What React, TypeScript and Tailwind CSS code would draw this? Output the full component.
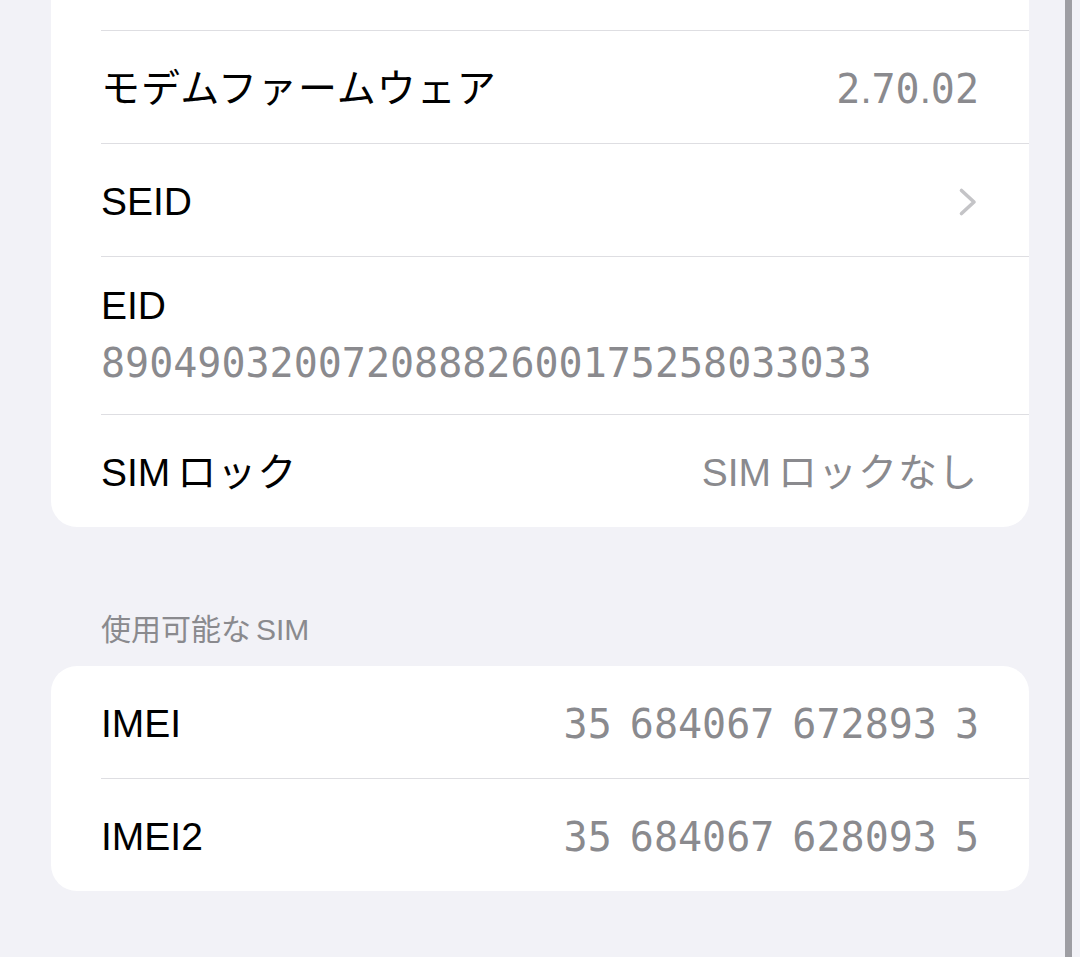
import { ReactNode } from "react";

const sans = "font-['Liberation_Sans','Noto_Sans_CJK_JP',sans-serif]";
const mono = "font-['DejaVu_Sans_Mono','Liberation_Mono',monospace]";

function Chevron() {
  return (
    <svg width="20" height="30" viewBox="0 0 20 30" fill="none">
      <path
        d="M3.5 3.5 L16 15 L3.5 26.5"
        stroke="#c4c4c7"
        strokeWidth="3.6"
        strokeLinecap="round"
        strokeLinejoin="round"
      />
    </svg>
  );
}

// iOS tabular digits: wide figures, narrow dots and spaces
function Digits({ text }: { text: string }) {
  return (
    <>
      {text.split("").map((ch, i) =>
        ch === "." ? (
          <span key={i} className={sans}>.</span>
        ) : ch === " " ? (
          <span key={i} className="inline-block w-[18px]" />
        ) : (
          <span key={i}>{ch}</span>
        ),
      )}
    </>
  );
}

function Row({
  label,
  value,
  first,
  children,
}: {
  label: ReactNode;
  value?: ReactNode;
  first?: boolean;
  children?: ReactNode;
}) {
  return (
    <div className="ml-[50px]">
      {!first && <div className="h-px bg-[#dedee2]" />}
      <div className="flex h-[112px] items-center justify-between pt-[4px] pr-[51px]">
        <span className="text-[39px] leading-[46px] text-black">{label}</span>
        {value}
        {children}
      </div>
    </div>
  );
}

function Value({ children }: { children: ReactNode }) {
  return <span className="text-[39px] leading-[46px] text-[#8a8a8e]">{children}</span>;
}

function NumValue({ text }: { text: string }) {
  return (
    <span className={`${mono} mr-[-1px] text-[40px] leading-[46px] text-[#8a8a8e]`}>
      <Digits text={text} />
    </span>
  );
}

export default function App() {
  return (
    <div className={`flex h-[957px] w-full overflow-hidden bg-[#f2f2f7] ${sans}`}>
      <div className="w-[1065px] shrink-0">
        {/* device info card (top cut off) */}
        <div className="ml-[51px] w-[978px] rounded-b-[26px] bg-white">
          <div className="h-[30px]" />
          <div className="ml-[50px]">
            <div className="h-px bg-[#dedee2]" />
          </div>
          <Row
            label={<span className="tracking-[1px]">モデムファームウェア</span>}
            first
            value={<NumValue text="2.70.02" />}
          />
          <Row label="SEID">
            <Chevron />
          </Row>
          <div className="ml-[50px]">
            <div className="h-px bg-[#dedee2]" />
            <div className="flex h-[157px] flex-col gap-[11px] pt-[26px] pb-[28px]">
              <span className="text-[39px] leading-[46px] text-black">EID</span>
              <span className={`${mono} text-[40px] leading-[46px] text-[#8a8a8e]`}>
                89049032007208882600175258033033
              </span>
            </div>
          </div>
          <Row
            label={
              <>
                SIM<span className="ml-[7px] tracking-[1px]">ロック</span>
              </>
            }
            value={
              <Value>
                SIM<span className="ml-[7px] tracking-[1px]">ロックなし</span>
              </Value>
            }
          />
        </div>

        {/* available SIM */}
        <div className="mt-[85px] mb-[18px] pl-[101px] text-[30px] leading-[36px] text-[#8a8a8e]">
          使用可能な<span className="ml-[5px]">SIM</span>
        </div>
        <div className="ml-[51px] w-[978px] rounded-[26px] bg-white">
          <Row label="IMEI" first value={<NumValue text="35 684067 672893 3" />} />
          <Row label="IMEI2" value={<NumValue text="35 684067 628093 5" />} />
        </div>
      </div>
      <div className="w-[7px] shrink-0 bg-[#9e9ea3]" />
      <div className="flex-1" />
    </div>
  );
}
